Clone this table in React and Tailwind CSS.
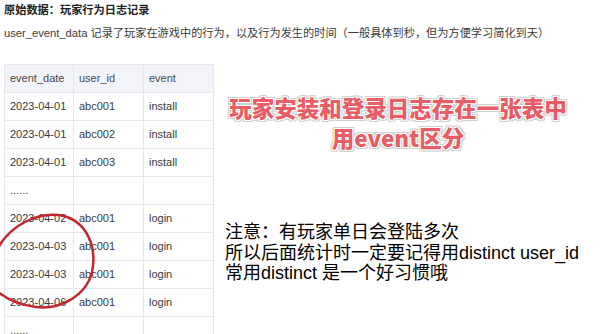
import React from "react";

const rows = [
  ["2023-04-01", "abc001", "install"],
  ["2023-04-01", "abc002", "install"],
  ["2023-04-01", "abc003", "install"],
  ["......", "", ""],
  ["2023-04-02", "abc001", "login"],
  ["2023-04-03", "abc001", "login"],
  ["2023-04-03", "abc001", "login"],
  ["2023-04-06", "abc001", "login"],
  ["......", "", ""],
];

export default function App() {
  return (
    <div className="relative w-[600px] h-[334px] overflow-hidden bg-white font-['Liberation_Sans','Noto_Sans_CJK_SC',sans-serif]">
      <div className="pl-[4px] pt-[3px]">
        <div className="text-[11.2px] leading-[14px] font-bold text-[#222]">原始数据：玩家行为日志记录</div>
        <div className="mt-[9px] text-[11.2px] leading-[14px] text-[#3a3a3a]">
          user_event_data 记录了玩家在游戏中的行为，以及行为发生的时间（一般具体到秒，但为方便学习简化到天）
        </div>
      </div>
      <div className="flex mt-[24px] pl-[4px]">
        <table className="table-fixed border-collapse w-[209px] text-[11px] text-[#3a3a3a]">
          <colgroup>
            <col className="w-[69px]" />
            <col className="w-[70px]" />
            <col className="w-[70px]" />
          </colgroup>
          <thead>
            <tr className="bg-[#f2f4fa]">
              <td className="border border-[#e4e7ee] h-[28px] px-[5px] text-[#4a4a4a]">event_date</td>
              <td className="border border-[#e4e7ee] h-[28px] px-[5px] text-[#4a4a4a]">user_id</td>
              <td className="border border-[#e4e7ee] h-[28px] px-[5px] text-[#4a4a4a]">event</td>
            </tr>
          </thead>
          <tbody>
            {rows.map((r, i) => (
              <tr key={i}>
                {r.map((c, j) => (
                  <td key={j} className="border border-[#e4e7ee] h-[28px] px-[5px] whitespace-nowrap">
                    {c}
                  </td>
                ))}
              </tr>
            ))}
          </tbody>
        </table>
        <div className="flex-1 pl-[11px]">
          <div className="mt-[28px] w-[350px] -ml-[2px] text-center text-[22.5px] leading-[30px] font-black text-[#e85d66] font-['Noto_Sans_CJK_SC',sans-serif] [text-shadow:1px_1px_0_#fff,-1px_-1px_0_#fff,1px_-1px_0_#fff,-1px_1px_0_#fff,2px_2px_0_#cfcfcf,-2px_-2px_0_#cfcfcf,2px_-2px_0_#cfcfcf,-2px_2px_0_#cfcfcf,0_2px_0_#cfcfcf,0_-2px_0_#cfcfcf,2px_0_0_#cfcfcf,-2px_0_0_#cfcfcf]">
            <div>玩家安装和登录日志存在一张表中</div>
            <div>用event区分</div>
          </div>
          <div className="mt-[70px] text-[18px] leading-[20.5px] text-black whitespace-nowrap">
            <div>注意：有玩家单日会登陆多次</div>
            <div>所以后面统计时一定要记得用distinct user_id</div>
            <div>常用distinct 是一个好习惯哦</div>
          </div>
        </div>
      </div>
      <svg className="absolute left-0 top-0 pointer-events-none" width="600" height="334" viewBox="0 0 600 334">
        <path
          d="M -2 248 C 10 226, 38 210, 64 216 C 88 223, 97 248, 92 272 C 86 296, 60 310, 36 307 C 20 305, 8 300, -2 292"
          fill="none"
          stroke="#c3262e"
          strokeWidth="2.5"
          strokeLinecap="round"
        />
      </svg>
    </div>
  );
}
